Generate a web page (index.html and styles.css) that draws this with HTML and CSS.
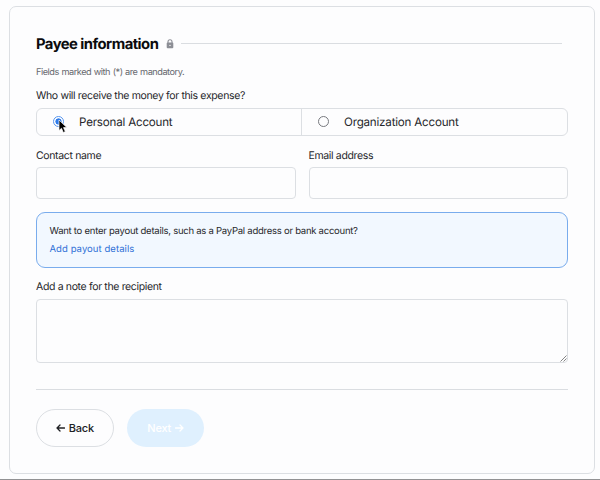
FILE: index.html
```html
<!DOCTYPE html>
<html lang="en">
<head>
<meta charset="utf-8">
<title>Payee information</title>
<link rel="stylesheet" href="styles.css">
</head>
<body>
<main class="card">
  <header class="heading">
    <h1>Payee information</h1>
    <svg class="lock" viewBox="0 0 8 10"><path d="M2 4V2.7a2 2 0 0 1 4 0V4" fill="none" stroke="#8c8e95" stroke-width="1.1"/><rect x=".7" y="3.6" width="6.6" height="5.6" rx="1" fill="#8c8e95"/><circle cx="4" cy="6.4" r=".7" fill="#fdfdfe"/></svg>
    <span class="rule"></span>
  </header>
  <p class="hint">Fields marked with (*) are mandatory.</p>
  <p class="label question">Who will receive the money for this expense?</p>
  <div class="choices">
    <div class="choice">
      <span class="radio selected">
        <svg class="cursor" viewBox="0 0 10 15"><path d="M1 1v10.5l2.5-2.2 1.8 4.2 2-.9-1.8-4h3.4z" fill="#000" stroke="#fff" stroke-width=".7"/></svg>
      </span>
      <span class="choice-text">Personal Account</span>
    </div>
    <div class="choice">
      <span class="radio"></span>
      <span class="choice-text">Organization Account</span>
    </div>
  </div>
  <div class="fields">
    <div class="field"><label class="label" for="name">Contact name</label><input id="name" type="text"></div>
    <div class="field"><label class="label" for="email">Email address</label><input id="email" type="text"></div>
  </div>
  <section class="info">
    <p>Want to enter payout details, such as a PayPal address or bank account?</p>
    <a>Add payout details</a>
  </section>
  <label class="label note" for="note">Add a note for the recipient</label>
  <div class="note-box">
    <textarea id="note"></textarea>
    <svg class="grip" viewBox="0 0 7 7"><path d="M.5 6.5l6-6M3.5 6.5l3-3" stroke="#777" stroke-width=".9"/></svg>
  </div>
  <hr>
  <div class="actions">
    <button class="back" type="button"><svg class="arrow" viewBox="0 0 9 8"><path d="M8.5 4H1M4 1L1 4l3 3"/></svg><span>Back</span></button>
    <button class="next" type="button"><span>Next</span><svg class="arrow" viewBox="0 0 9 8"><path d="M.5 4H8M5 1l3 3-3 3"/></svg></button>
  </div>
</main>
<footer class="edge"></footer>
</body>
</html>
```
FILE: styles.css
```css
* { box-sizing: border-box; }
body {
  margin: 0;
  height: 480px;
  padding: 6px 5px 0 9px;
  display: flex;
  flex-direction: column;
  justify-content: space-between;
  overflow: hidden;
  background: #fdfdfe;
  color: #26272b;
  font-family: Inter, "Liberation Sans", sans-serif;
  text-rendering: geometricPrecision;
}
p, h1 { margin: 0; }
.card {
  height: 468px;
  padding: 25px 26px 0;
  border: 1px solid #dcdfe3;
  border-radius: 7px;
}
.heading { display: flex; align-items: center; height: 24px; padding-right: 6px; }
h1 { color: #0b0b0d; font-size: 14.8px; line-height: 24px; font-weight: 700; letter-spacing: -.53px; white-space: nowrap; width: 130px; }
.lock { width: 8px; height: 10px; flex: none; }
.rule { flex: 1; height: 1px; margin: 0 0 1px 7px; background: #dadde1; }
.hint { margin-top: 11px; font-size: 9.2px; line-height: 12px; color: #67696f; letter-spacing: -.48px; word-spacing: .5px; }
.label { display: block; font-size: 10.5px; line-height: 14px; letter-spacing: -.35px; }
.question { margin-top: 10px; }
.choices { display: flex; height: 28px; margin-top: 5px; border: 1px solid #dcdfe3; border-radius: 6px; }
.choice { flex: 0 0 264px; display: flex; align-items: center; padding-left: 16px; }
.choice + .choice { flex: 1; border-left: 1px solid #dcdfe3; }
.radio { position: relative; width: 11px; height: 11px; border: 1px solid #77797e; border-radius: 50%; margin-bottom: 1px; }
.radio.selected { border-color: #5795ee; background: radial-gradient(circle, #2e7bea 0 2.8px, #fff 3.4px); }
.cursor { position: absolute; left: 4px; top: 2px; width: 10px; height: 15px; }
.choice-text { margin-left: 15px; font-size: 11.6px; line-height: 18px; letter-spacing: -.2px; }
.fields { display: grid; grid-template-columns: 1fr 1fr; gap: 13px; margin-top: 13px; }
input, textarea { display: block; width: 100%; margin: 0; border: 1px solid #dcdfe3; border-radius: 4px; background: transparent; outline: none; }
input { height: 32px; margin-top: 4px; }
.info { height: 56px; margin-top: 13px; padding: 10.5px 12.5px; border: 1px solid #79aced; border-radius: 9px; background: #f2f8ff; font-size: 9.5px; line-height: 15px; letter-spacing: -.25px; }
.info a { display: block; margin-top: 3.5px; color: #2d6fd6; letter-spacing: .07px; }
.note { margin-top: 12px; }
.note-box { position: relative; margin-top: 5px; }
textarea { height: 64px; resize: none; }
.grip { position: absolute; right: 1px; bottom: 1px; width: 7px; height: 7px; }
hr { height: 1px; border: 0; margin: 26px 0 19px; background: #dadde1; }
.actions { display: flex; gap: 13px; }
button { display: flex; align-items: center; justify-content: center; gap: 3.5px; height: 38px; padding: 0; border-radius: 19px; font: 500 11px/16px Inter, sans-serif; letter-spacing: -.2px; }
.back { width: 78px; border: 1px solid #dcdfe3; background: transparent; color: #202125; }
.next { width: 77px; border: 0; background: #dff0fe; color: #fff; }
.arrow { width: 9px; height: 8px; fill: none; stroke: currentColor; stroke-width: 1.3; stroke-linecap: round; stroke-linejoin: round; }
.edge { height: 1px; margin: 0 -5px 0 -9px; background: #929294; }
```
